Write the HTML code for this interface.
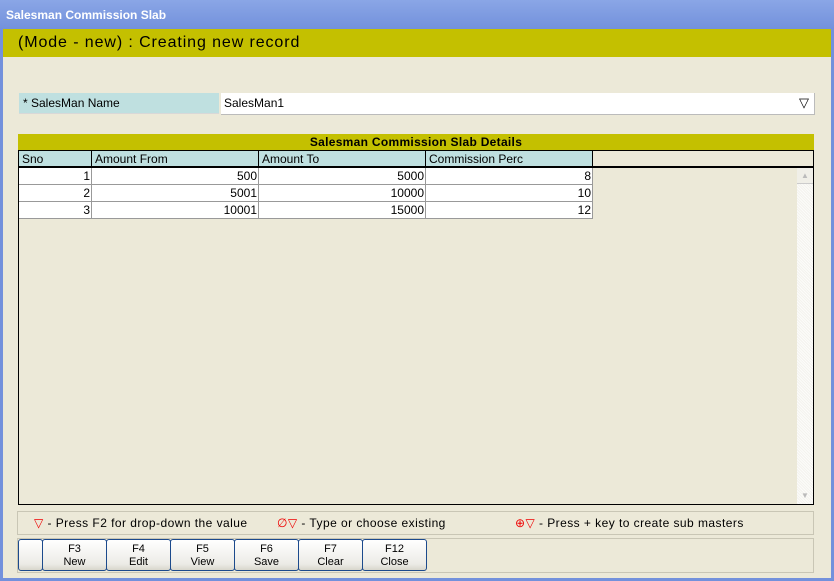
<!DOCTYPE html>
<html><head><style>
*{margin:0;padding:0;box-sizing:border-box}
body{width:834px;height:581px;overflow:hidden;font-family:"Liberation Sans",sans-serif;background:#ece9d8;position:relative}
.a{position:absolute}
.title{left:0;top:0;width:834px;height:29px;background:linear-gradient(#8aa6e6,#7391dc);color:#fff;font-size:12px;font-weight:bold;padding:8px 0 0 6px}
.lb{left:0;top:29px;width:3px;height:552px;background:#7391dc}
.rb{right:0;top:29px;width:3px;height:552px;background:#7391dc}
.bb{left:0;bottom:0;width:834px;height:3px;background:#7391dc}
.mode{left:3px;top:29px;width:828px;height:28px;background:#c4c000;font-size:16px;padding:5px 0 0 15px;letter-spacing:0.9px}
.lab{left:19px;top:93px;width:200px;height:21px;background:#bfe0e0;font-size:12px;padding:3px 0 0 4px;border-bottom:1px solid #d8d8d8}
.inp{left:221px;top:93px;width:594px;height:22px;background:#fff;border-bottom:1px solid #bbb;border-right:1px solid #bbb;font-size:12px;padding:3px 0 0 3px}
.gh{left:18px;top:134px;width:796px;height:16px;background:#c4c000;font-size:12px;font-weight:bold;text-align:center;padding-top:1px;letter-spacing:0.3px}
.grid{left:18px;top:150px;width:796px;height:355px;border:1px solid #000;border-top:1px solid #000}
.hr{left:18px;top:150px;width:796px;height:18px;border:1px solid #000;border-bottom:2px solid #000}
.hc{top:151px;height:15px;background:#bfe0e0;border-right:1px solid #000;font-size:12px;padding:1px 0 0 3px}
.c{height:17px;background:#fff;border-right:1px solid #999;border-bottom:1px solid #999;font-size:12px;text-align:right;padding:1px 1px 0 0}
.sb{left:797px;top:168px;width:16px;height:336px;background:repeating-linear-gradient(45deg,#f4f3ee 0 1px,#fcfcfa 1px 2px)}
.leg{left:17px;top:511px;width:797px;height:24px;border:1px solid #c9c6b5;font-size:12px;letter-spacing:0.45px}
.btns{left:17px;top:538px;width:797px;height:35px;border:1px solid #c9c6b5}
.b{top:539px;height:32px;border:1px solid #1c4a8c;border-radius:3px;background:linear-gradient(#fff,#ecebe6 80%,#d8d6cc);font-size:11px;text-align:center;line-height:13px;padding-top:3px}
.r{color:#e00}
</style></head><body>
<div class="a title">Salesman Commission Slab</div>
<div class="a lb"></div><div class="a rb"></div><div class="a bb"></div>
<div class="a mode">(Mode - new) : Creating new record</div>
<div class="a lab">* SalesMan Name</div>
<div class="a inp">SalesMan1<span style="position:absolute;right:5px;top:2px;font-size:13px">▽</span></div>
<div class="a gh">Salesman Commission Slab Details</div>
<div class="a grid"></div>
<div class="a hr"></div>
<div class="a hc" style="left:19px;width:73px">Sno</div>
<div class="a hc" style="left:92px;width:167px">Amount From</div>
<div class="a hc" style="left:259px;width:167px">Amount To</div>
<div class="a hc" style="left:426px;width:167px">Commission Perc</div>
<div class="a" style="left:19px;top:168px">
<div style="display:flex"><div class="c" style="width:73px">1</div><div class="c" style="width:167px">500</div><div class="c" style="width:167px">5000</div><div class="c" style="width:167px">8</div></div>
<div style="display:flex"><div class="c" style="width:73px">2</div><div class="c" style="width:167px">5001</div><div class="c" style="width:167px">10000</div><div class="c" style="width:167px">10</div></div>
<div style="display:flex"><div class="c" style="width:73px">3</div><div class="c" style="width:167px">10001</div><div class="c" style="width:167px">15000</div><div class="c" style="width:167px">12</div></div>
</div>
<div class="a sb"><div style="height:16px;background:#f0efe8;border-bottom:1px solid #ccc;color:#bbb;font-size:8px;text-align:center;line-height:16px">▲</div><div style="position:absolute;bottom:0;width:16px;height:16px;color:#bbb;font-size:8px;text-align:center;line-height:16px">▼</div></div>
<div class="a leg"><span class="a" style="left:16px;top:4px"><span class="r">▽</span> - Press F2 for drop-down the value</span><span class="a" style="left:259px;top:4px"><span class="r">∅▽</span> - Type or choose existing</span><span class="a" style="left:497px;top:4px"><span class="r">⊕▽</span> - Press + key to create sub masters</span></div>
<div class="a btns"></div>
<div class="a b" style="left:18px;width:25px"></div>
<div class="a b" style="left:42px;width:65px">F3<br>New</div>
<div class="a b" style="left:106px;width:65px">F4<br>Edit</div>
<div class="a b" style="left:170px;width:65px">F5<br>View</div>
<div class="a b" style="left:234px;width:65px">F6<br>Save</div>
<div class="a b" style="left:298px;width:65px">F7<br>Clear</div>
<div class="a b" style="left:362px;width:65px">F12<br>Close</div>
</body></html>
